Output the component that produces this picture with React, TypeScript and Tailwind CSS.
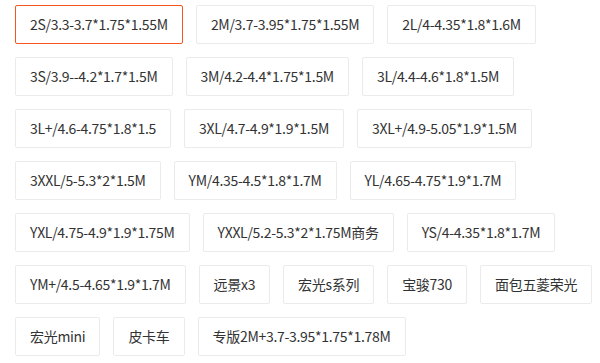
import React, { useState } from 'react';
import clsx from 'clsx';

const models = [
  '2S/3.3-3.7*1.75*1.55M',
  '2M/3.7-3.95*1.75*1.55M',
  '2L/4-4.35*1.8*1.6M',
  '3S/3.9--4.2*1.7*1.5M',
  '3M/4.2-4.4*1.75*1.5M',
  '3L/4.4-4.6*1.8*1.5M',
  '3L+/4.6-4.75*1.8*1.5',
  '3XL/4.7-4.9*1.9*1.5M',
  '3XL+/4.9-5.05*1.9*1.5M',
  '3XXL/5-5.3*2*1.5M',
  'YM/4.35-4.5*1.8*1.7M',
  'YL/4.65-4.75*1.9*1.7M',
  'YXL/4.75-4.9*1.9*1.75M',
  'YXXL/5.2-5.3*2*1.75M商务',
  'YS/4-4.35*1.8*1.7M',
  'YM+/4.5-4.65*1.9*1.7M',
  '远景x3',
  '宏光s系列',
  '宝骏730',
  '面包五菱荣光',
  '宏光mini',
  '皮卡车',
  '专版2M+3.7-3.95*1.75*1.78M',
];

const App: React.FC = () => {
  const [active, setActive] = useState(0);

  return (
    <div
      className="w-[600px] bg-white pl-[15px] pt-[5px] flex flex-wrap gap-[13px]"
      style={{ fontFamily: '"Noto Sans CJK SC", sans-serif' }}
    >
      {models.map((m, i) => (
        <div
          key={m}
          onClick={() => setActive(i)}
          className={clsx(
            'h-[39px] px-[14px] flex items-center border border-solid rounded-[2px] text-[14px] tracking-[-0.3px] text-[#333] bg-white cursor-pointer whitespace-nowrap',
            i === active ? 'border-[#f5561f]' : 'border-[#ebebeb]'
          )}
        >
          {m}
        </div>
      ))}
    </div>
  );
};

export default App;
